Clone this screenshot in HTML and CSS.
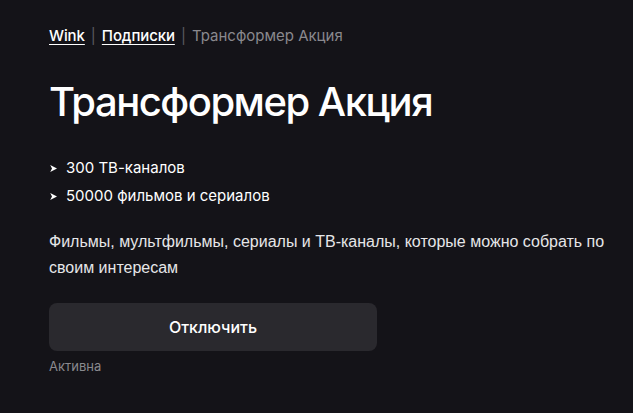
FILE: index.html
```html
<!DOCTYPE html>
<html lang="ru">
<head>
<meta charset="utf-8">
<link rel="stylesheet" href="styles.css">
</head>
<body>
<main class="page">
  <nav class="crumbs">
    <a class="crumb-link" href="#">Wink</a>
    <span class="sep">|</span>
    <a class="crumb-link" href="#">Подписки</a>
    <span class="sep">|</span>
    <span class="crumb-current">Трансформер Акция</span>
  </nav>
  <h1 class="title">Трансформер Акция</h1>
  <ul class="features">
    <li class="feature"><svg class="bullet" viewBox="0 0 7 7" width="7" height="7"><path d="M0.2 0 L7 3.5 L0.2 7 L2 3.5 Z" fill="#fff"/></svg>300 ТВ-каналов</li>
    <li class="feature"><svg class="bullet" viewBox="0 0 7 7" width="7" height="7"><path d="M0.2 0 L7 3.5 L0.2 7 L2 3.5 Z" fill="#fff"/></svg>50000 фильмов и сериалов</li>
  </ul>
  <p class="desc">Фильмы, мультфильмы, сериалы и ТВ-каналы, которые можно собрать по своим интересам</p>
  <button class="btn">Отключить</button>
  <div class="status">Активна</div>
</main>
</body>
</html>
```
FILE: styles.css
```css
html, body {
  margin: 0;
  padding: 0;
  background: #141318;
  height: 100%;
}
.page {
  padding: 26px 0 0 49px;
  font-family: Inter, "Noto Sans", sans-serif;
  color: #fff;
}
.crumbs {
  display: flex;
  align-items: center;
  gap: 6px;
  font-size: 15px;
  line-height: 20px;
  font-weight: 500;
}
.crumb-link {
  color: #fff;
  text-decoration: underline;
  text-underline-offset: 3px;
  text-decoration-thickness: 1px;
  letter-spacing: -0.1px;
}
.sep {
  color: #5b5a60;
  font-weight: 400;
}
.crumb-current {
  color: #8a898e;
  font-weight: 400;
}
.title {
  margin: 30px 0 0 0;
  font-size: 40px;
  line-height: 52px;
  font-weight: 500;
  letter-spacing: -1.5px;
}
.features {
  list-style: none;
  margin: 30px 0 0 0;
  padding: 0;
  display: flex;
  flex-direction: column;
  gap: 8px;
}
.feature {
  display: flex;
  align-items: center;
  gap: 9px;
  font-size: 15px;
  line-height: 20px;
}
.bullet {
  flex: none;
  margin-left: 1px;
}
.desc {
  margin: 23px 0 0 0;
  width: 560px;
  font-family: "Liberation Sans", Arial, sans-serif;
  font-size: 16px;
  line-height: 26px;
  color: #e6e6e8;
}
.btn {
  display: block;
  margin-top: 22px;
  width: 328px;
  height: 48px;
  border: none;
  border-radius: 8px;
  background: #2a292e;
  color: #fff;
  font-family: Inter, "Noto Sans", sans-serif;
  font-size: 16px;
  font-weight: 500;
}
.status {
  margin-top: 6px;
  font-size: 13px;
  line-height: 18px;
  color: #8a898e;
}
```
